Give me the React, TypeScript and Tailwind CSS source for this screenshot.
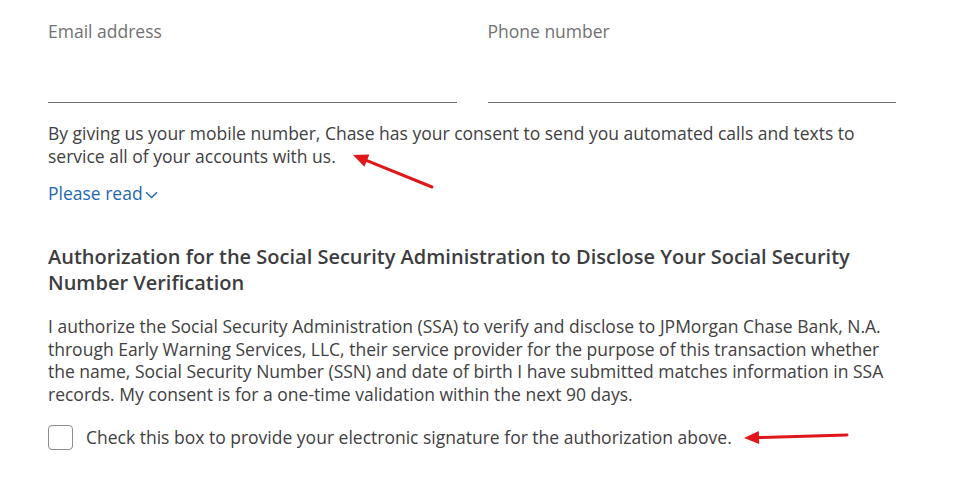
function Field({ label }: { label: string }) {
  return (
    <div className="flex-1">
      <div className="text-[17.5px] leading-6 text-[#717171]">{label}</div>
      <div className="h-[60px] border-b border-[#6b6b6b]" />
    </div>
  );
}

function Arrow({ x1, y1, x2, y2 }: { x1: number; y1: number; x2: number; y2: number }) {
  const a = Math.atan2(y2 - y1, x2 - x1);
  const len = 15;
  const w = 6.5;
  const bx = x2 - len * Math.cos(a);
  const by = y2 - len * Math.sin(a);
  const px = -Math.sin(a) * w;
  const py = Math.cos(a) * w;
  return (
    <g>
      <line x1={x1} y1={y1} x2={bx} y2={by} stroke="#e0161b" strokeWidth={3} strokeLinecap="round" />
      <polygon points={`${x2},${y2} ${bx + px},${by + py} ${bx - px},${by - py}`} fill="#e0161b" />
    </g>
  );
}

export default function App() {
  return (
    <div
      className="relative w-[964px] h-[485px] bg-white overflow-hidden text-[#414042]"
      style={{ fontFamily: '"Open Sans", sans-serif' }}
    >
      <div className="w-[848px] ml-[48px] pt-[19px]">
        <div className="flex gap-[31px]">
          <Field label="Email address" />
          <Field label="Phone number" />
        </div>

        <p className="mt-[19px] text-[17.5px] leading-[23px]">
          By giving us your mobile number, Chase has your consent to send you automated calls and texts to
          service all of your accounts with us.
        </p>

        <button className="mt-[13px] flex items-center text-[17.5px] leading-6 text-[#1f67b1]">
          Please read
          <svg className="ml-[2px] mt-[3px]" width="13" height="8" viewBox="0 0 13 8" fill="none">
            <path d="M1 1.2 L6.5 6.5 L12 1.2" stroke="currentColor" strokeWidth="1.4" />
          </svg>
        </button>

        <h2 className="mt-[39px] text-[20px] leading-[26px] font-semibold text-[#3d3d3f]">
          Authorization for the Social Security Administration to Disclose Your Social Security Number
          Verification
        </h2>

        <p className="mt-[19px] text-[17.5px] leading-[22.7px]">
          I authorize the Social Security Administration (SSA) to verify and disclose to JPMorgan Chase Bank, N.A.
          through Early Warning Services, LLC, their service provider for the purpose of this transaction whether
          the name, Social Security Number (SSN) and date of birth I have submitted matches information in SSA
          records. My consent is for a one-time validation within the next 90 days.
        </p>

        <label className="mt-[19px] flex items-center gap-[13px] text-[17.5px] leading-6">
          <span className="w-[25px] h-[25px] rounded-[4px] border border-[#8c8c8c] bg-white shrink-0" />
          Check this box to provide your electronic signature for the authorization above.
        </label>
      </div>

      <svg className="absolute inset-0 pointer-events-none" width={964} height={485}>
        <Arrow x1={432} y1={187} x2={353} y2={155} />
        <Arrow x1={847} y1={435} x2={744} y2={438} />
      </svg>
    </div>
  );
}
